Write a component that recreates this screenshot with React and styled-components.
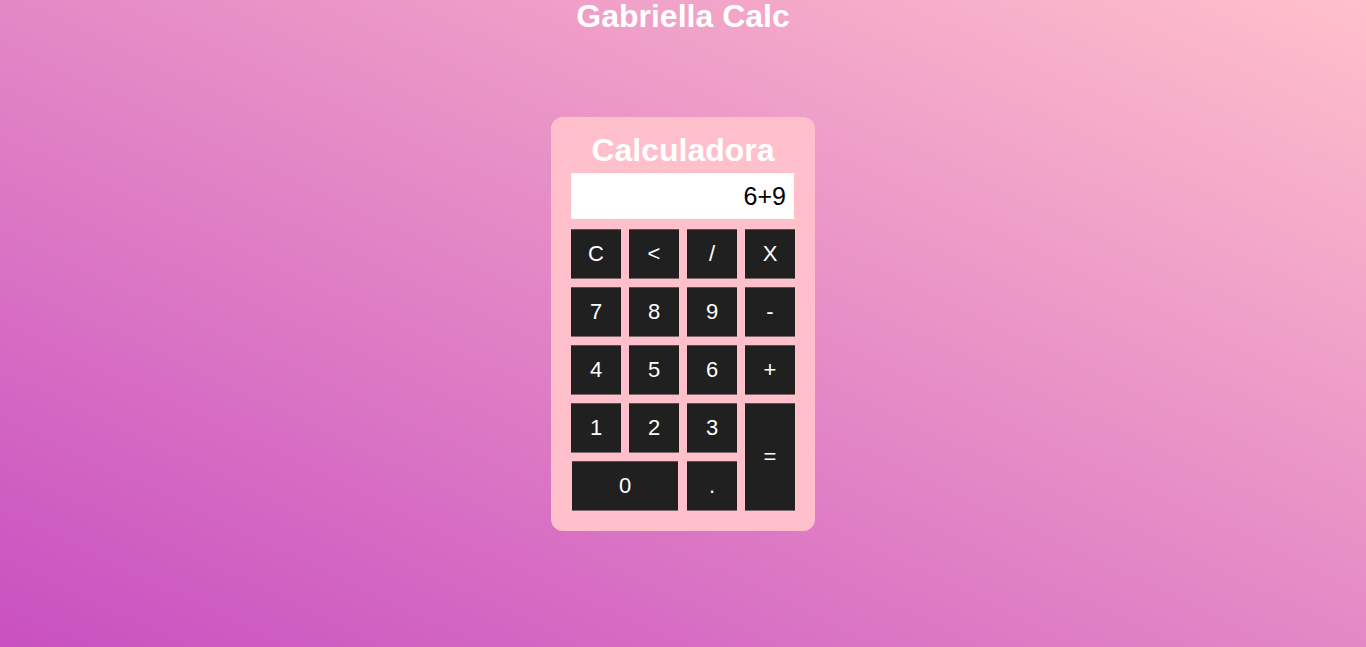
import styled, { createGlobalStyle } from 'styled-components';

const GlobalStyle = createGlobalStyle`
  html, body {
    margin: 0;
    padding: 0;
    height: 100%;
  }
  body {
    font-family: "Liberation Sans", Arial, sans-serif;
    background: linear-gradient(to top right, #c850c0, #ffc0cb);
    min-height: 647px;
  }
`;

const Page = styled.div`
  display: flex;
  flex-direction: column;
  align-items: center;
  height: 647px;
`;

const PageTitle = styled.h1`
  margin: 0;
  font-size: 32px;
  line-height: 32px;
  font-weight: bold;
  color: #fff;
  padding-top: 0;
`;

const Card = styled.div`
  margin-top: 85px;
  width: 224px;
  padding: 16px 20px 20px;
  background: #ffc0cb;
  border-radius: 12px;
  display: flex;
  flex-direction: column;
`;

const CardTitle = styled.h2`
  margin: 0 0 6px;
  font-size: 32px;
  line-height: 34px;
  font-weight: bold;
  color: #fff;
  text-align: center;
`;

const Display = styled.div`
  height: 46px;
  width: 223px;
  background: #fff;
  box-sizing: border-box;
  padding-right: 8px;
  display: flex;
  align-items: center;
  justify-content: flex-end;
  font-size: 25px;
  color: #000;
  margin-bottom: 10px;
`;

const Keys = styled.div`
  display: grid;
  grid-template-columns: repeat(4, 50px);
  grid-auto-rows: 50px;
  gap: 8px;
`;

const Key = styled.button`
  font-family: "Liberation Sans", Arial, sans-serif;
  background: #202020;
  color: #fff;
  font-size: 22px;
  border: none;
  border-top: 1px solid #5e4e52;
  border-bottom: 1px solid #7a6a6e;
  padding: 0;
  display: flex;
  align-items: center;
  justify-content: center;
  grid-column: ${(p) => (p.$wide ? 'span 2' : 'auto')};
  grid-row: ${(p) => (p.$tall ? 'span 2' : 'auto')};
  margin-left: ${(p) => (p.$wide ? '1px' : '0')};
  width: ${(p) => (p.$wide ? '106px' : '50px')};
`;

const rows = [
  ['C', '<', '/', 'X'],
  ['7', '8', '9', '-'],
  ['4', '5', '6', '+'],
];

export default function App() {
  return (
    <>
      <GlobalStyle />
      <Page>
        <PageTitle>Gabriella Calc</PageTitle>
        <Card>
          <CardTitle>Calculadora</CardTitle>
          <Display>6+9</Display>
          <Keys>
            {rows.flat().map((k) => (
              <Key key={k}>{k}</Key>
            ))}
            <Key>1</Key>
            <Key>2</Key>
            <Key>3</Key>
            <Key $tall>=</Key>
            <Key $wide>0</Key>
            <Key>.</Key>
          </Keys>
        </Card>
      </Page>
    </>
  );
}
